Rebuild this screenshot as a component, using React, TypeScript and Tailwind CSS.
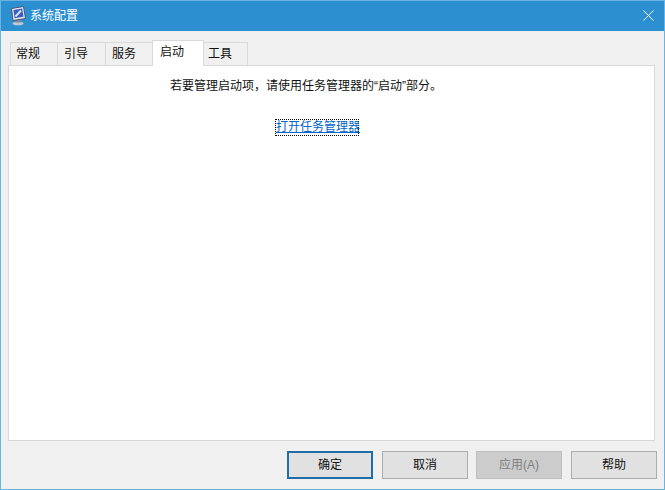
const font = { fontFamily: '"Liberation Sans", "Noto Sans CJK SC", sans-serif' };

const tabs = [
  { label: "常规", className: "w-[48px] pl-[5px]" },
  { label: "引导", className: "-ml-px w-[49px] pl-[6px]" },
  { label: "服务", className: "-ml-px w-[48px] pl-[6px]" },
  { label: "启动", active: true, className: "-ml-px w-[52px] pl-[7px]" },
  { label: "工具", className: "-ml-px w-[45px] pl-[4px]" },
];

const MonitorIcon = () => (
  <svg width="18" height="20" viewBox="0 0 18 20">
    <ellipse cx="8" cy="17.5" rx="5.5" ry="1.8" fill="#c4c7cd" />
    <rect x="5.5" y="13" width="5" height="3.5" fill="#7f869a" />
    <path d="M1.5 2.5 L13.5 0.5 L15.5 12.5 L3 14.5 Z" fill="#e6e8f0" stroke="#4d5475" />
    <path d="M3.5 4 L12.2 2.6 L13.5 10.8 L4.6 12.2 Z" fill="#3b5fc0" />
    <path d="M5.5 10.5 L11 4.5" stroke="#d3e2fb" strokeWidth="2" />
  </svg>
);

const CloseIcon = () => (
  <svg width="11" height="11" viewBox="0 0 11 11" stroke="white" strokeWidth="1" className="-mt-px">
    <path d="M0.5 0.5 L10.5 10.5 M10.5 0.5 L0.5 10.5" />
  </svg>
);

const Button = ({
  label,
  primary,
  disabled,
  className = "",
}: {
  label: string;
  primary?: boolean;
  disabled?: boolean;
  className?: string;
}) => (
  <div
    className={`flex h-[28px] w-[86px] items-center justify-center text-[12px] ${
      primary
        ? "border-2 border-[#1f6ea8] bg-[#e1e1e1] text-[#111]"
        : disabled
          ? "border border-[#bfbfbf] bg-[#cccccc] text-[#808080]"
          : "border border-[#adadad] bg-[#e1e1e1] text-[#111]"
    } ${className}`}
  >
    {label}
  </div>
);

export default function App() {
  return (
    <div
      className="flex h-[490px] w-[665px] flex-col border border-[#6bb3e0] bg-[#f0f0f0]"
      style={font}
    >
      <div className="flex h-[30px] items-center justify-between bg-[#2b8fd0] pl-[9px] pr-[10px]">
        <div className="flex items-center gap-[2px]">
          <MonitorIcon />
          <span className="text-[12px] text-white">系统配置</span>
        </div>
        <CloseIcon />
      </div>

      <div className="flex flex-1 flex-col px-[7px] pt-[9px]">
        <div className="mr-[2px] flex h-[25px] items-end pl-[2px]">
          {tabs.map((tab) =>
            tab.active ? (
              <div
                key={tab.label}
                className={`relative z-10 -mb-px flex h-[26px] items-start border border-b-0 border-[#d9d9d9] bg-white pt-[2px] text-[12px] text-[#111] ${tab.className}`}
              >
                {tab.label}
              </div>
            ) : (
              <div
                key={tab.label}
                className={`flex h-[23px] items-center border border-b-0 border-[#d9d9d9] bg-[#f0f0f0] text-[12px] text-[#111] ${tab.className}`}
              >
                {tab.label}
              </div>
            ),
          )}
        </div>

        <div className="mr-[2px] h-[376px] border border-[#d9d9d9] bg-white pl-[161px] pt-[11px]">
          <p className="text-[12px] leading-[18px] text-[#111]">若要管理启动项，请使用任务管理器的“启动”部分。</p>
          <a className="ml-[105px] mt-[24px] inline-block w-[84px] whitespace-nowrap border border-dotted border-black text-[12px] leading-[15px] text-[#0066cc] underline">
            打开任务管理器
          </a>
        </div>

        <div className="mt-[10px] flex justify-end gap-[9px]">
          <Button label="确定" primary />
          <Button label="取消" />
          <Button label="应用(A)" disabled className="-ml-px" />
          <Button label="帮助" />
        </div>
      </div>
    </div>
  );
}
